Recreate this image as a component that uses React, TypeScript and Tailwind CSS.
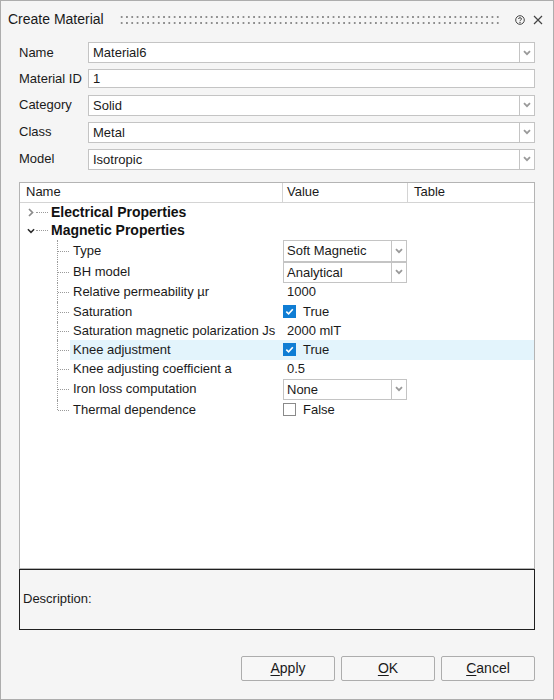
import React from "react";

const font = "font-['Liberation_Sans',Arial,sans-serif]";

function DropArrow() {
  return (
    <svg width="8" height="6" viewBox="0 0 8 6" fill="none">
      <path d="M1 1.2 L4 4.2 L7 1.2" stroke="#9a9a9a" strokeWidth="1.8" />
    </svg>
  );
}

function Combo({ value, className }: { value: string; className?: string }) {
  return (
    <div className={`flex border border-[#c4c4c4] bg-white ${className ?? ""}`}>
      <span className="flex flex-1 items-center pl-[3px] leading-none">{value}</span>
      <span className="flex w-[15px] items-center justify-center border-l border-[#c4c4c4]">
        <DropArrow />
      </span>
    </div>
  );
}

function Check({ on }: { on: boolean }) {
  return on ? (
    <span className="flex h-[13px] w-[13px] items-center justify-center bg-[#0f7dd4]">
      <svg width="11" height="11" viewBox="0 0 11 11" fill="none">
        <path d="M2.3 5.6 L4.6 7.8 L8.8 3.2" stroke="#fff" strokeWidth="1.6" />
      </svg>
    </span>
  ) : (
    <span className="h-[13px] w-[13px] border border-[#8a8a8a] bg-white" />
  );
}

type Value =
  | { kind: "combo"; text: string }
  | { kind: "text"; text: string }
  | { kind: "check"; on: boolean };

interface Prop {
  label: string;
  h: string;
  value: Value;
  selected?: boolean;
}

const props: Prop[] = [
  { label: "Type", h: "h-[22px]", value: { kind: "combo", text: "Soft Magnetic" } },
  { label: "BH model", h: "h-[21px]", value: { kind: "combo", text: "Analytical" } },
  { label: "Relative permeability µr", h: "h-[19px]", value: { kind: "text", text: "1000" } },
  { label: "Saturation", h: "h-[20px]", value: { kind: "check", on: true } },
  { label: "Saturation magnetic polarization Js", h: "h-[18px]", value: { kind: "text", text: "2000 mlT" } },
  { label: "Knee adjustment", h: "h-[20px]", value: { kind: "check", on: true }, selected: true },
  { label: "Knee adjusting coefficient a", h: "h-[19px]", value: { kind: "text", text: "0.5" } },
  { label: "Iron loss computation", h: "h-[21px]", value: { kind: "combo", text: "None" } },
  { label: "Thermal dependence", h: "h-[20px]", value: { kind: "check", on: false } },
];

function ValueCell({ value }: { value: Value }) {
  if (value.kind === "combo") return <Combo value={value.text} className="h-full w-[124px]" />;
  if (value.kind === "text") return <span className="pl-[4px]">{value.text}</span>;
  return (
    <span className="flex items-center gap-[7px]">
      <Check on={value.on} />
      <span>{value.on ? "True" : "False"}</span>
    </span>
  );
}

function GroupRow({ label, open, h }: { label: string; open: boolean; h: string }) {
  return (
    <div className={`flex items-center ${h} pl-[7px]`}>
      <span className="flex w-[8px] items-center justify-center">
        {open ? (
          <svg width="9" height="6" viewBox="0 0 9 6" fill="none">
            <path d="M1 1 L4.5 4.5 L8 1" stroke="#2a2a2a" strokeWidth="1.7" />
          </svg>
        ) : (
          <svg width="6" height="9" viewBox="0 0 6 9" fill="none">
            <path d="M1 1 L4.5 4.5 L1 8" stroke="#8a8a8a" strokeWidth="1.7" />
          </svg>
        )}
      </span>
      <span className="ml-[1px] w-[12px] border-t border-dotted border-[#9a9a9a]" />
      <span className="ml-[3px] text-[14px] font-bold text-[#111]">{label}</span>
    </div>
  );
}

export default function App() {
  const fields = [
    { label: "Name", value: "Material6", combo: true },
    { label: "Material ID", value: "1", combo: false },
    { label: "Category", value: "Solid", combo: true },
    { label: "Class", value: "Metal", combo: true },
    { label: "Model", value: "Isotropic", combo: true },
  ];

  return (
    <div className={`${font} flex h-[700px] w-[554px] flex-col border border-[#adadad] bg-[#f5f5f5] text-[13px] text-[#1a1a1a]`}>
      {/* title bar */}
      <div className="flex h-[37px] items-center pl-[7px] pr-[10px]">
        <span className="text-[14px] text-[#1a1a1a]">Create Material</span>
        <div className="ml-[15px] h-[12px] flex-1 bg-[radial-gradient(circle,#8e8e8e_1px,transparent_1.3px)] bg-[length:5.3px_6px]" />
        <svg className="ml-[15px]" width="10" height="10" viewBox="0 0 10 10" fill="none">
          <circle cx="5" cy="5" r="4.3" stroke="#444" strokeWidth="1" />
          <path d="M3.5 4 C3.5 2.3 6.5 2.3 6.5 4 C6.5 5 5 5 5 6.1" stroke="#444" strokeWidth="1" />
          <circle cx="5" cy="7.5" r="0.65" fill="#444" />
        </svg>
        <svg className="ml-[8px]" width="10" height="10" viewBox="0 0 10 10" fill="none">
          <path d="M1 1 L9 9 M9 1 L1 9" stroke="#444" strokeWidth="1.2" />
        </svg>
      </div>

      {/* form */}
      <div className="mt-[4px] flex flex-col gap-[6px] pl-[18px] pr-[18px]">
        {fields.map((f) => (
          <div key={f.label} className="flex items-center">
            <span className="w-[69px]">{f.label}</span>
            {f.combo ? (
              <Combo value={f.value} className="h-[21px] flex-1 [&>span:first-child]:pl-[4px]" />
            ) : (
              <div className="flex h-[19px] flex-1 items-center border border-[#c4c4c4] bg-white pl-[4px]">{f.value}</div>
            )}
          </div>
        ))}
      </div>

      {/* property tree */}
      <div className="mx-[18px] mt-[12px] flex h-[387px] flex-col border border-[#b4b4b4] bg-white">
        <div className="flex h-[20px] border-b border-[#d4d4d4]">
          <div className="flex w-[263px] items-center border-r border-[#d4d4d4] pl-[6px]">Name</div>
          <div className="flex w-[125px] items-center border-r border-[#d4d4d4] pl-[4px]">Value</div>
          <div className="flex flex-1 items-center pl-[6px]">Table</div>
        </div>
        <GroupRow label="Electrical Properties" open={false} h="h-[19px]" />
        <GroupRow label="Magnetic Properties" open h="h-[18px]" />
        {props.map((p, i) => {
          const last = i === props.length - 1;
          return (
            <div key={p.label} className={`flex ${p.h}`}>
              <span className="w-[37px]" />
              <span className="relative w-[13px]">
                <span
                  className={`absolute left-0 top-0 border-l border-dotted border-[#9a9a9a] ${last ? "h-1/2" : "h-full"}`}
                />
                <span className="absolute left-[1px] top-1/2 w-[11px] border-t border-dotted border-[#9a9a9a]" />
              </span>
              <div className={`flex flex-1 items-center ${p.selected ? "bg-[#e3f4fc]" : ""}`}>
                <span className="w-[213px] pl-[3px]">{p.label}</span>
                <div className="flex h-full items-center">
                  <ValueCell value={p.value} />
                </div>
              </div>
            </div>
          );
        })}
      </div>

      {/* description */}
      <div className="mx-[18px] flex h-[61px] items-center border border-[#1f1f1f] pl-[3px]">Description:</div>

      {/* buttons */}
      <div className="mt-[26px] flex justify-end gap-[6px] pr-[18px]">
        {[
          ["A", "pply"],
          ["O", "K"],
          ["C", "ancel"],
        ].map(([k, rest]) => (
          <button
            key={k}
            className="flex h-[25px] w-[94px] items-center justify-center rounded-[2px] border border-[#adadad] bg-[#f7f7f7] text-[14px] text-[#1a1a1a]"
          >
            <span className="underline underline-offset-[2px]">{k}</span>
            {rest}
          </button>
        ))}
      </div>
    </div>
  );
}
